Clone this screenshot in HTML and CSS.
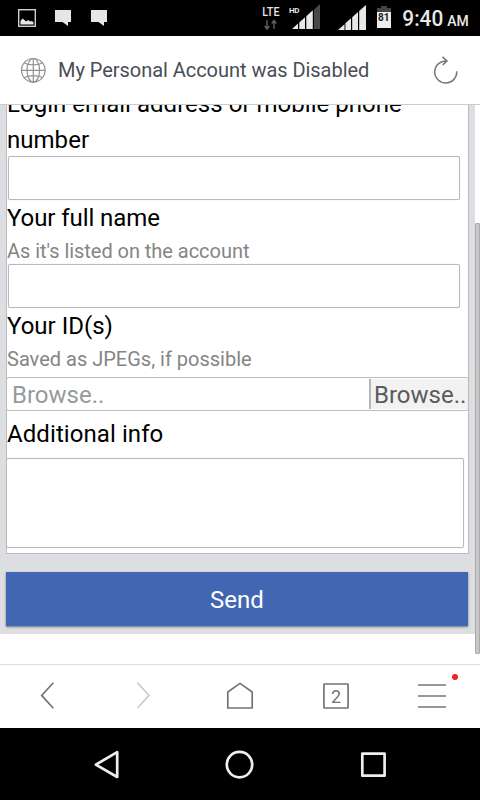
FILE: index.html
```html
<!DOCTYPE html>
<html lang="en">
<head>
<meta charset="utf-8">
<title>My Personal Account was Disabled</title>
<link rel="stylesheet" href="styles.css">
</head>
<body>
<div class="phone">
  <div class="status">
    <svg width="480" height="36" viewBox="0 0 480 36">
      <rect x="18.700" y="9.700" width="16.600" height="16.600" fill="none" stroke="#cfcfcf" stroke-width="1.400"/>
      <path d="M20.500 24.500V21L22.500 18.500L24.500 20L26 21.500L28.500 20L30 21.500L32 21L33.500 22.500V24.500Z" fill="#e8e8e8"/>
      <path d="M55 10h16v12h-3v4l-5.500-4H55zM91 10h16v12h-3v4l-5.500-4H91z" fill="#e6e6e6"/>
      <text class="lte" x="262.300" y="15.800" textLength="17.200" lengthAdjust="spacingAndGlyphs">LTE</text>
      <path d="M267 20v8M264.700 26l2.300 3 2.300-3M274 29v-8M271.700 23.500l2.300-3 2.300 3" fill="none" stroke="#606060" stroke-width="1.400"/>
      <text class="hd" x="289" y="13" textLength="10.500">HD</text>
      <path d="M292 29l6-5.500V29zM299.300 22.500l5.700-5.200V29h-5.700zM306.300 16.300l6.500-6V29h-6.500z" fill="#e8e8e8"/>
      <path d="M314 9.500l6-5.500v25h-6z" fill="#484848"/>
      <path d="M338 30l6.500-5.700V30zM345.400 23.300l5.600-5V30h-5.600zM352.200 17.300l5.800-5.300v18h-5.800zM359.200 11l6.800-6v25h-6.800z" fill="#e8e8e8"/>
      <path d="M381 6h6v2h4v4h-14V8h4z" fill="#444"/>
      <path d="M377 12h14v16h-14z" fill="#ececec"/>
      <text class="level" x="378" y="21" textLength="11.500">81</text>
      <text class="clock" x="402.300" y="25.800" textLength="41" lengthAdjust="spacingAndGlyphs">9:40</text>
      <text class="ampm" x="447.300" y="25.800" textLength="21.500" lengthAdjust="spacingAndGlyphs">AM</text>
    </svg>
  </div>
  <header class="titlebar">
    <svg class="globe" width="26" height="26" viewBox="0 0 26 26">
      <g fill="none" stroke="#929292" stroke-width="1.200">
        <circle cx="13.300" cy="13.300" r="11.800"/><ellipse cx="13.300" cy="13.300" rx="6.300" ry="11.800"/>
        <path d="M13.300 1.500v24M1.500 13.300h24M4.300 6c5 2.600 13 2.600 18 0M4.300 20.500c5-2.600 13-2.600 18 0"/>
      </g>
    </svg>
    <h1 class="title">My Personal Account was Disabled</h1>
    <svg class="reload" width="26" height="28" viewBox="0 0 26 28">
      <path d="M23.700 15.200A11 11 0 1 1 13.500 5M9.500 .9L14 5L9.700 8.900" fill="none" stroke="#777" stroke-width="1.500"/>
    </svg>
  </header>
  <main class="viewport">
    <form class="page">
      <div class="card">
        <label class="label first">Login email address or mobile phone<br>number</label>
        <div class="input lead"></div>
        <label class="label name">Your full name</label>
        <p class="hint listed">As it's listed on the account</p>
        <div class="input"></div>
        <label class="label">Your ID(s)</label>
        <p class="hint">Saved as JPEGs, if possible</p>
        <div class="file"><span class="file-name">Browse..</span><span class="file-button">Browse..</span></div>
        <label class="label info">Additional info</label>
        <div class="area"></div>
      </div>
      <div class="send">Send</div>
    </form>
    <div class="scrollbar"></div>
  </main>
  <nav class="tools">
    <svg width="480" height="63" viewBox="0 0 480 63" fill="none" stroke="#757575" stroke-width="1.700">
      <path d="M53.300 17.700L41.700 30.400L53.300 43.200"/>
      <path d="M137.300 17.700L149 30.400L137.300 43.200" stroke="#ccc"/>
      <path d="M227.800 43V27L240 18.400L252.200 27V43Z" stroke-linejoin="round"/>
      <rect x="323.900" y="19" width="24.200" height="24" rx=".5"/>
      <path d="M418 20h28M418 31h28M418 42h28"/>
      <circle cx="455" cy="12" r="3" fill="#f52020" stroke="none"/>
      <text class="tabs" x="336" y="38.200" text-anchor="middle">2</text>
    </svg>
  </nav>
  <footer class="system">
    <svg width="480" height="72" viewBox="0 0 480 72" fill="none" stroke="#eee" stroke-width="2.700" stroke-linejoin="round">
      <path d="M95.800 36.700L117.200 24.200V49Z"/>
      <circle cx="239.500" cy="36.600" r="12.700"/>
      <rect x="362.300" y="25.700" width="22.300" height="22"/>
    </svg>
  </footer>
</div>
</body>
</html>
```
FILE: styles.css
```css
* { box-sizing: border-box; }
body { margin: 0; font-family: Roboto, "Liberation Sans", sans-serif; background: #fff; }
svg { display: block; }
.phone { display: flex; flex-direction: column; width: 480px; height: 800px; overflow: hidden; }
.status { flex: none; height: 36px; background: #000; }
.lte { font-size: 12.500px; font-weight: 500; fill: #e4e4e4; }
.hd { font-size: 8px; font-weight: 700; fill: #e4e4e4; }
.level { font-size: 10px; font-weight: 700; fill: #222; }
.clock { font-size: 22px; font-weight: 500; fill: #e8e8e8; }
.ampm { font-size: 15.500px; font-weight: 500; fill: #e8e8e8; }
.titlebar { flex: none; display: flex; align-items: center; height: 69px; padding: 0 21px 0 20px; border-bottom: 1px solid #ccc; background: #fff; }
.title { flex: 1; margin: 0 0 0 12px; font-size: 20px; font-weight: 400; line-height: 28px; letter-spacing: -.04px; color: #4a4d57; white-space: nowrap; }
.reload { margin-bottom: 1px; }
.viewport { position: relative; flex: none; height: 559px; overflow: hidden; background: #fff; }
.page { width: 475px; height: 529px; padding: 0 6px; background: #dddee2; overflow: hidden; }
.card { display: flex; flex-direction: column; width: 463px; height: 449px; border: 1px solid #bcbcc0; border-top: 0; background: #fff; }
.label { flex: none; height: 36px; font-size: 24px; line-height: 36px; color: #000; white-space: nowrap; }
.label.first { height: 72px; margin-top: -19px; letter-spacing: .03px; }
.label.name { letter-spacing: -.08px; }
.hint { flex: none; height: 28px; margin: 1px 0 -1px; font-size: 20px; line-height: 28px; color: #858585; }
.hint.listed { letter-spacing: -.04px; }
.input { flex: none; width: 452px; height: 44px; margin: 0 0 0 1px; border: 1px solid #b9b9b9; border-radius: 2px; background: #fff; box-shadow: 0 0 1px #ccc; }
.input.lead { margin-top: -2px; }
.file { flex: none; display: flex; align-items: center; height: 34px; margin: 5px -1px 0; border: 1px solid #bcbcbc; border-radius: 3px; background: #fff; font-size: 24px; }
.file-name { flex: 1; height: 30px; padding-left: 5px; line-height: 32px; color: #979b9a; }
.file-button { width: 99px; height: 30px; padding-left: 3px; border-left: 2px solid #b6b6b6; background: #f2f2f2; line-height: 32px; color: #5b5b5b; }
.label.info { margin-top: 5px; letter-spacing: .08px; }
.area { flex: none; width: 458px; height: 90px; margin: 6px 0 0 -1px; border: 1px solid #b9b9b9; border-radius: 2px; box-shadow: 0 0 1px #ccc; }
.send { width: 462px; height: 54px; margin-top: 18px; background: #4267b2; box-shadow: 0 1px 2px rgba(0, 0, 0, .5); color: #fff; font-size: 24px; line-height: 56px; text-align: center; }
.scrollbar { position: absolute; top: 118px; right: 0; width: 5px; height: 431px; border: 1px solid #aaa; border-radius: 1px; background: #c8c8c8; }
.tools { flex: none; height: 64px; border-top: 1px solid #ddd; background: #fff; }
.tabs { font-size: 18px; fill: #757575; stroke: none; }
.system { flex: none; height: 72px; background: #000; }
```
